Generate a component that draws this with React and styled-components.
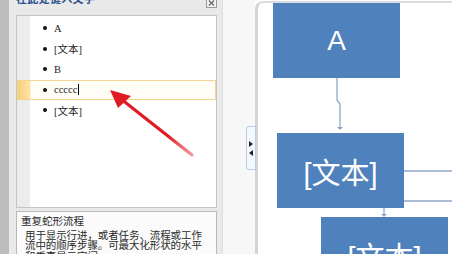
import { createGlobalStyle, styled } from "styled-components";

const Global = createGlobalStyle`
  html, body {
    margin: 0;
    padding: 0;
    background: #fff;
  }
  body {
    font-family: "Noto Sans CJK SC", "Noto Sans", sans-serif;
  }
`;

const Screen = styled.div`
  position: relative;
  width: 452px;
  height: 254px;
  overflow: hidden;
  display: flex;
  background: #fff;
`;

const LeftEdge = styled.div`
  width: 9px;
  flex-shrink: 0;
  background: #bdbdbd;
`;

const Panel = styled.div`
  width: 213px;
  flex-shrink: 0;
  margin-top: -6px;
  padding: 0 5px 0 7px;
  box-sizing: border-box;
  background: #e9e9e9;
  display: flex;
  flex-direction: column;
`;

const TitleBar = styled.div`
  height: 21px;
  flex-shrink: 0;
  display: flex;
  justify-content: space-between;
  align-items: flex-start;
  box-sizing: border-box;
`;

const Title = styled.span`
  font-size: 11px;
  line-height: 12px;
  font-weight: 700;
  color: #2d5190;
  letter-spacing: 0.3px;
  margin-top: -2px;
`;

const Close = styled.svg`
  width: 11px;
  height: 10px;
  margin-top: 4px;
`;

const ListBox = styled.div`
  height: 193px;
  flex-shrink: 0;
  box-sizing: border-box;
  border: 1px solid #c4c4c4;
  background: linear-gradient(to right, #ececec 13px, #fff 13px);
  padding-top: 2px;
`;

const Row = styled.div`
  height: 20.5px;
  box-sizing: border-box;
  display: flex;
  align-items: center;
  padding-left: 25px;
  font-family: "Liberation Serif", "Noto Sans CJK SC", serif;
  font-size: 10.5px;
  color: #1a1a1a;
  border: 1px solid ${(p) => (p.$active ? "#f2d68f" : "transparent")};
  background: ${(p) =>
    p.$active
      ? "linear-gradient(to right, #f8cf78 0, #fbe3a8 12px, #fffdf5 13px, #fffdf5 100%)"
      : "transparent"};
`;

const Bullet = styled.span`
  width: 4px;
  height: 4px;
  border-radius: 50%;
  background: #111;
  margin-right: 7px;
  flex-shrink: 0;
`;

const Cursor = styled.span`
  display: inline-block;
  width: 1px;
  height: 11px;
  background: #000;
  margin-left: 1px;
`;

const DescBox = styled.div`
  flex: 1;
  min-height: 0;
  overflow: hidden;
  margin-top: 3px;
  border: 1px solid #b8b8b8;
  border-bottom: none;
  background: #fbfbfb;
  padding: 4px 4px 0 4px;
  font-size: 10.5px;
  line-height: 10.5px;
  color: #2a2a2a;
`;

const DescTitle = styled.div`
  margin-bottom: 3px;
`;

const DescText = styled.div`
  padding-left: 4px;
  letter-spacing: -0.1px;
  white-space: nowrap;
`;

const Gutter = styled.div`
  width: 33px;
  flex-shrink: 0;
  background: #f7f7f7;
  border-left: 1px solid #dedede;
  box-sizing: border-box;
  display: flex;
  align-items: flex-start;
  justify-content: flex-end;
  padding-top: 126px;
`;

const Tab = styled.div`
  width: 10px;
  height: 44px;
  margin-right: -1px;
  box-sizing: border-box;
  border: 1px solid #b9cde3;
  border-radius: 3px 0 0 3px;
  background: #f4f9fd;
  display: flex;
  flex-direction: column;
  align-items: center;
  justify-content: center;
  gap: 3px;
  position: relative;
  z-index: 1;
`;

const Tri = styled.span`
  width: 0;
  height: 0;
  border-top: 3px solid transparent;
  border-bottom: 3px solid transparent;
  ${(p) =>
    p.$dir === "right"
      ? "border-left: 4px solid #222;"
      : "border-right: 4px solid #222;"}
`;

const Canvas = styled.div`
  flex: 1;
  position: relative;
  margin-top: 1px;
  border-left: 3px solid #d4d4d4;
  border-top: 2px solid #dcdcdc;
  border-top-left-radius: 8px;
  background: #fff;
`;

const Shape = styled.div`
  position: absolute;
  left: ${(p) => p.$x}px;
  top: ${(p) => p.$y}px;
  width: 127px;
  height: 75px;
  background: #4f81bd;
  color: #fff;
  display: flex;
  align-items: center;
  justify-content: center;
  font-family: "Liberation Sans", "Noto Sans CJK SC", sans-serif;
  font-size: ${(p) => p.$size}px;
`;

const Lines = styled.svg`
  position: absolute;
  left: 0;
  top: 0;
  width: 200px;
  height: 260px;
  overflow: visible;
`;

const Annotation = styled.svg`
  position: absolute;
  left: 0;
  top: 0;
  width: 452px;
  height: 254px;
  pointer-events: none;
`;

const items = ["A", "[文本]", "B", "ccccc", "[文本]"];

export default function App() {
  return (
    <>
      <Global />
      <Screen>
        <LeftEdge />
        <Panel>
          <TitleBar>
            <Title>在此处键入文字</Title>
            <Close viewBox="0 0 11 10">
              <rect x="0.5" y="0.5" width="10" height="9" fill="#f2f2f2" stroke="#9a9a9a" />
              <path d="M3 2.5 L8 7.5 M8 2.5 L3 7.5" stroke="#6a6a6a" strokeWidth="1.4" />
            </Close>
          </TitleBar>
          <ListBox>
            {items.map((t, i) => (
              <Row key={i} $active={i === 3}>
                <Bullet />
                {t}
                {i === 3 && <Cursor />}
              </Row>
            ))}
          </ListBox>
          <DescBox>
            <DescTitle>重复蛇形流程</DescTitle>
            <DescText>用于显示行进，或者任务、流程或工作</DescText>
            <DescText>流中的顺序步骤。可最大化形状的水平</DescText>
            <DescText>和垂直显示空间。</DescText>
          </DescBox>
        </Panel>
        <Gutter>
          <Tab>
            <Tri $dir="right" />
            <Tri $dir="left" />
          </Tab>
        </Gutter>
        <Canvas>
          <Lines viewBox="0 0 200 260">
            <g stroke="#8ea6cc" strokeWidth="1.3" fill="none">
              <path d="M79 75 V97 L82 101 V124" />
              <path d="M145 168 H200 M145 198 H200" />
              <path d="M126 204 V212" />
            </g>
            <g fill="#8ea6cc">
              <path d="M79 124 L85 124 L82 127 Z" />
              <path d="M123 211 L129 211 L126 214 Z" />
            </g>
          </Lines>
          <Shape $x={15} $y={0} $size={28}>A</Shape>
          <Shape $x={19} $y={130} $size={29}>[文本]</Shape>
          <Shape $x={63} $y={214} $size={29}>[文本]</Shape>
        </Canvas>
        <Annotation viewBox="0 0 452 254">
          <defs>
            <linearGradient id="fade" x1="192" y1="155" x2="112" y2="92" gradientUnits="userSpaceOnUse">
              <stop offset="0" stopColor="#e8303a" stopOpacity="0.5" />
              <stop offset="0.3" stopColor="#e01b24" />
              <stop offset="1" stopColor="#e01b24" />
            </linearGradient>
          </defs>
          <path d="M192 155 L121 99" stroke="url(#fade)" strokeWidth="3.2" strokeLinecap="round" />
          <path d="M110 90 L131 96 L118 108 Z" fill="#e01b24" />
        </Annotation>
      </Screen>
    </>
  );
}
